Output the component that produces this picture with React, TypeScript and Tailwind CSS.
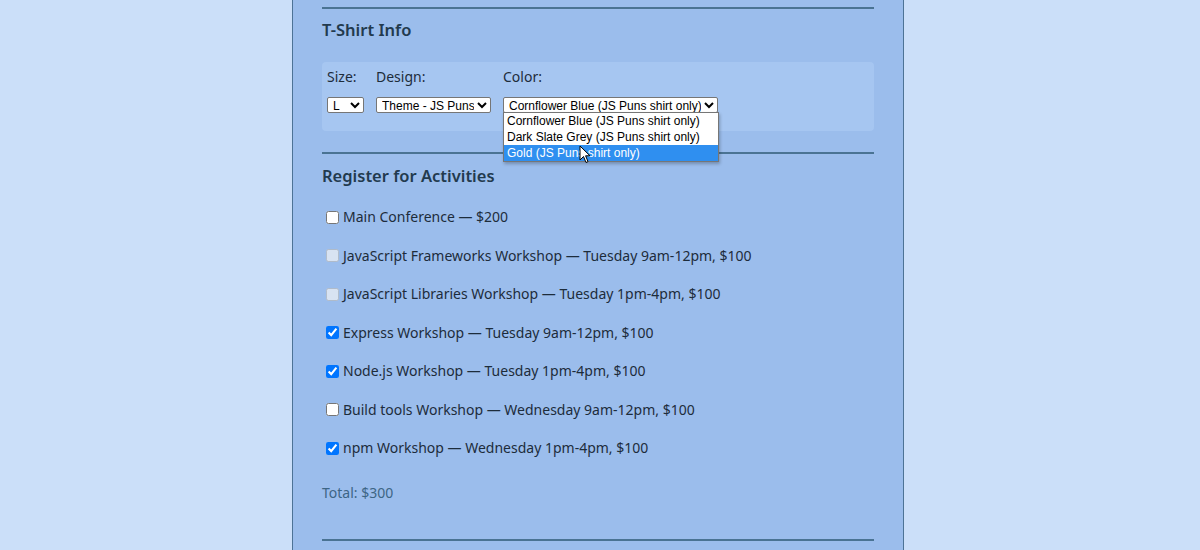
const activities = [
  { label: "Main Conference — $200", checked: false, disabled: false },
  { label: "JavaScript Frameworks Workshop — Tuesday 9am-12pm, $100", checked: false, disabled: true },
  { label: "JavaScript Libraries Workshop — Tuesday 1pm-4pm, $100", checked: false, disabled: true },
  { label: "Express Workshop — Tuesday 9am-12pm, $100", checked: true, disabled: false },
  { label: "Node.js Workshop — Tuesday 1pm-4pm, $100", checked: true, disabled: false },
  { label: "Build tools Workshop — Wednesday 9am-12pm, $100", checked: false, disabled: false },
  { label: "npm Workshop — Wednesday 1pm-4pm, $100", checked: true, disabled: false }
];

const colorOptions = [
  "Cornflower Blue (JS Puns shirt only)",
  "Dark Slate Grey (JS Puns shirt only)",
  "Gold (JS Puns shirt only)"
];

const selectCls =
  "h-[16px] border border-[#767676] bg-white pl-[1px] text-[12px] leading-[14px] text-black rounded-[2px] [font-family:'Liberation_Sans',Arial,sans-serif]";

export default function App() {
  return (
    <div className="flex min-h-[550px] justify-center overflow-hidden bg-[#cbdff9] pr-[4px] [font-family:'Noto_Sans',sans-serif]">
      <div className="w-[612px] border-x border-[#4d7396] bg-[#9bbdec] px-[29px]">
        <div className="mt-[7px] h-[2px] bg-[#4a7393]" />
        <h2 className="mt-[9px] text-[16.5px] leading-[24px] font-semibold text-[#223a4e]">T-Shirt Info</h2>

        <div className="mt-[20px] h-[69px] rounded-[4px] bg-[#a6c6f1] pl-[5px] pt-[5px] text-[14px] text-[#1d2c3b]">
          <div className="flex">
            <div className="w-[49px]">
              <label className="block leading-[20px]">Size:</label>
              <select className={`mt-[10px] w-[37px] ${selectCls}`} defaultValue="L">
                <option>L</option>
              </select>
            </div>
            <div className="w-[127px]">
              <label className="block leading-[20px]">Design:</label>
              <select className={`mt-[10px] w-[115px] ${selectCls}`}>
                <option>Theme - JS Puns</option>
              </select>
            </div>
            <div className="relative">
              <label className="block leading-[20px]">Color:</label>
              <select className={`mt-[10px] w-[215px] ${selectCls}`}>
                <option>{colorOptions[0]}</option>
              </select>
              <div className="absolute left-0 top-[45px] z-10 w-[216px] border border-[#767676] bg-white shadow-[1px_2px_3px_rgba(0,0,0,0.25)] [font-family:'Liberation_Sans',Arial,sans-serif]">
                {colorOptions.map((c, i) => (
                  <div
                    key={c}
                    className={`h-[16px] pl-[3px] text-[12px] leading-[16px] ${
                      i === 2 ? "bg-[#2f8ff0] text-white" : "text-black"
                    }`}
                  >
                    {c}
                  </div>
                ))}
                <svg
                  className="absolute left-[75px] top-[32px]"
                  width="12"
                  height="19"
                  viewBox="0 0 12 19"
                >
                  <path d="M1 1 L1 15 L4.5 11.5 L7 17.5 L9 16.6 L6.6 10.8 L11 10.8 Z" fill="#fff" stroke="#000" strokeWidth="1" />
                </svg>
              </div>
            </div>
          </div>
        </div>

        <div className="mt-[21px] h-[2px] bg-[#4a7393]" />
        <h2 className="mt-[10px] text-[16.5px] leading-[24px] font-semibold text-[#223a4e]">Register for Activities</h2>

        <div className="mt-[10px] flex flex-col text-[14px] text-[#1d2c3b]">
          {activities.map((a) => (
            <label key={a.label} className="flex h-[38.5px] items-center">
              <input
                type="checkbox"
                defaultChecked={a.checked}
                disabled={a.disabled}
                className="ml-[4px] mr-[4px] h-[13px] w-[13px]"
              />
              <span className="leading-[20px]">{a.label}</span>
            </label>
          ))}
        </div>

        <p className="mt-[15px] text-[14px] leading-[20px] text-[#3d6585]">Total: $300</p>

        <div className="mt-[36px] h-[2px] bg-[#4a7393]" />
      </div>
    </div>
  );
}
